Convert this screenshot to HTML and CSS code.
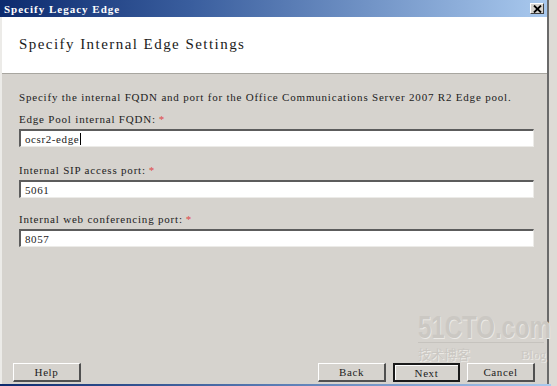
FILE: index.html
```html
<!DOCTYPE html>
<html lang="en">
<head>
    <meta charset="UTF-8">
    <title>Specify Legacy Edge</title>
    <link rel="stylesheet" href="styles.css">
</head>
<body>

<div class="window">
    <!-- Title bar -->
    <div class="titlebar">
        <span class="title">Specify Legacy Edge</span>
        <span class="close">
            <svg width="9" height="8" viewBox="0 0 9 8"><path d="M1 0.5 L8 7.5 M8 0.5 L1 7.5" stroke="#000" stroke-width="1.8"/></svg>
        </span>
    </div>

    <!-- Page header -->
    <div class="header">
        <h1>Specify Internal Edge Settings</h1>
    </div>

    <!-- Form content -->
    <div class="content">
        <p class="intro">Specify the internal FQDN and port for the Office Communications Server 2007 R2 Edge pool.</p>

        <div class="form-group first">
            <label>Edge Pool internal FQDN:<span class="req">*</span></label>
            <div class="field"><span>ocsr2-edge</span><span class="caret"></span></div>
        </div>
        <div class="form-group second">
            <label>Internal SIP access port:<span class="req">*</span></label>
            <div class="field"><span>5061</span></div>
        </div>
        <div class="form-group">
            <label>Internal web conferencing port:<span class="req">*</span></label>
            <div class="field"><span>8057</span></div>
        </div>
    </div>

    <!-- Buttons -->
    <div class="footer">
        <button type="button" class="btn">Help</button>
        <div class="nav">
            <button type="button" class="btn">Back</button>
            <button type="button" class="btn default">Next</button>
            <button type="button" class="btn">Cancel</button>
        </div>
    </div>

    <div class="watermark">
        <div class="wm-big">51CTO.com</div>
        <div class="wm-small"><span>技术博客</span><span class="wm-blog">Blog</span></div>
    </div>
</div>
<div class="bottom-strip"></div>

</body>
</html>
```

FILE: styles.css
```css
body { margin: 0; background-color: #dedbd6; font-family: "Liberation Serif", "DejaVu Serif", serif; color: #222; }
.window { position: relative; width: 549px; height: 384px; background-color: #d6d3ce; border-right: 2px solid #6a6a6a; display: flex; flex-direction: column; box-sizing: border-box; border-left: 2px solid #ecebe8; }

.titlebar { height: 17px; display: flex; align-items: center; justify-content: space-between; padding: 0 3px 0 2px; background: linear-gradient(to right, #0c2a6e 0%, #3a5e9e 35%, #a9c9ee 100%); margin-left: -2px; }
.title { color: #fff; font-weight: bold; font-size: 11px; letter-spacing: 1px; padding-left: 2px; }
.close { width: 14px; height: 11px; display: flex; align-items: center; justify-content: center; background-color: #d6d3ce; border-top: 1px solid #fff; border-left: 1px solid #fff; border-right: 1px solid #404040; border-bottom: 1px solid #404040; box-sizing: border-box; }

.header { height: 57px; background-color: #fff; border-bottom: 1px solid #a8a6a0; display: flex; align-items: center; padding-left: 17px; box-sizing: border-box; }
.header h1 { margin: 0 0 2px; font-size: 15px; font-weight: normal; letter-spacing: 1.45px; color: #1a1a1a; }

.content { padding: 16px 0 0 17px; font-size: 11px; }
.intro { margin: 0 0 8px; line-height: 14px; letter-spacing: 0.8px; }
.form-group { margin-bottom: 14px; }
.form-group.first { margin-bottom: 16px; }
.form-group label { display: block; line-height: 14px; margin-bottom: 3px; letter-spacing: 0.8px; }
.req { color: #e04848; margin-left: 3px; }
.field { width: 515px; height: 18px; box-sizing: border-box; background-color: #fff; border-top: 2px solid #5c5c5c; border-left: 2px solid #5c5c5c; border-right: 1px solid #ecebe8; border-bottom: 1px solid #ecebe8; padding-left: 4px; display: flex; align-items: center; font-size: 11px; letter-spacing: 0.6px; }
.caret { width: 1px; height: 12px; background-color: #000; margin-left: 1px; }

.footer { margin-top: auto; display: flex; justify-content: space-between; padding: 0 12px 2px 11px; }
.nav { display: flex; gap: 7px; }
.btn { width: 68px; height: 19px; padding: 0; font-family: "Liberation Serif", "DejaVu Serif", serif; font-size: 11px; letter-spacing: 0.6px; color: #222; background-color: #d6d3ce; border-top: 1px solid #fff; border-left: 1px solid #fff; border-right: 2px solid #505050; border-bottom: 2px solid #505050; box-sizing: border-box; }
.btn.default { width: 67px; border: 2px solid #1a1a1a; box-shadow: inset 1px 1px 0 #fff; }

.watermark { position: absolute; left: 416px; top: 312px; width: 128px; color: #cbc8c3; text-shadow: 1px 1px 0 #eceae6; pointer-events: none; }
.wm-big { font-family: "Liberation Sans", sans-serif; font-weight: bold; font-size: 32px; line-height: 30px; transform: scaleX(0.75); transform-origin: left; border-bottom: 1px solid #c6c3be; width: 168px; }
.wm-small { display: flex; justify-content: space-between; align-items: baseline; margin-top: 4px; font-family: "Noto Sans CJK SC", sans-serif; font-size: 13px; line-height: 14px; }
.wm-blog { font-family: "Liberation Serif", serif; font-size: 13px; }

.bottom-strip { height: 2px; width: 551px; background: linear-gradient(to right, #0c2a6e 0%, #5a7cb4 50%, #a9c9ee 100%); }
```
